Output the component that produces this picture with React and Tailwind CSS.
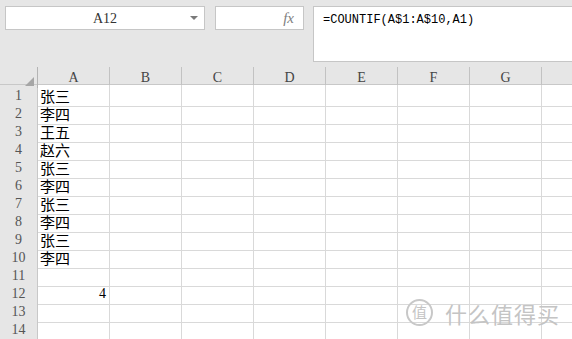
import { useState } from "react";

const cols = ["A", "B", "C", "D", "E", "F", "G", ""];
const names = ["张三", "李四", "王五", "赵六", "张三", "李四", "张三", "李四", "张三", "李四"];

export default function App() {
  const [sel] = useState("A12");

  const rows = Array.from({ length: 14 }, (_, i) => i + 1);

  return (
    <div className="relative w-[572px] h-[339px] overflow-hidden bg-white font-['Liberation_Serif',serif]">
      {/* barra de fórmulas */}
      <div className="flex items-start h-[67px] bg-[#e6e6e6] pt-[6px]">
        <div className="relative ml-[5px] w-[200px] h-[24px] bg-white border border-[#c6c6c6] flex items-center justify-center text-[14px] text-[#333]">
          {sel}
          <span className="absolute right-[6px] top-[9px] w-0 h-0 border-l-[4px] border-r-[4px] border-t-[4px] border-l-transparent border-r-transparent border-t-[#7a7a7a]" />
        </div>
        <div className="ml-[10px] w-[89px] h-[24px] bg-white border border-[#c6c6c6] flex items-center justify-end pr-[9px] text-[15px] italic text-[#808080]">
          fx
        </div>
        <div className="ml-[9px] flex-1 h-[56px] bg-white border border-[#c6c6c6] border-r-0 pl-[9px] pt-[4px] text-[12px] text-black font-['Liberation_Mono',monospace]">
          =COUNTIF(A$1:A$10,A1)
        </div>
      </div>

      {/* cabecera de columnas */}
      <div className="grid grid-cols-[38px_72px_72px_72px_72px_72px_72px_72px_72px] h-[18px] bg-[#e6e6e6] border-b border-[#c8c8c8]">
        <div className="relative border-r border-[#b4b4b4]">
          <span className="absolute right-[3px] bottom-[2px] w-0 h-0 border-b-[9px] border-l-[9px] border-b-[#a6a6a6] border-l-transparent" />
        </div>
        {cols.map((c, i) => (
          <div
            key={i}
            className="flex items-center justify-center border-r border-[#c2c2c2] text-[14px] text-[#444]"
          >
            {c}
          </div>
        ))}
      </div>

      {/* filas */}
      {rows.map((r) => (
        <div
          key={r}
          className="grid grid-cols-[38px_72px_72px_72px_72px_72px_72px_72px_72px] h-[18px]"
        >
          <div className="flex items-center justify-center bg-[#e6e6e6] border-r border-b border-[#c8c8c8] text-[14px] text-[#555]">
            {r}
          </div>
          {cols.map((c, i) => (
            <div
              key={i}
              className={
                "flex items-center overflow-hidden border-r border-b border-[#d9d9d9] text-[14px] text-black leading-[17px] " +
                (r === 12 && i === 0 ? "justify-end pr-[3px]" : "pl-[2px]")
              }
            >
              {i === 0 && r <= 10 && (
                <span className="font-['Noto_Sans_CJK_SC',sans-serif] text-[15px] leading-[17px]">
                  {names[r - 1]}
                </span>
              )}
              {i === 0 && r === 12 && "4"}
            </div>
          ))}
        </div>
      ))}

      {/* marca de agua */}
      <div className="absolute left-[406px] top-[299px] flex items-center gap-[12px] text-[#c4c4c4] pointer-events-none">
        <span className="w-[27px] h-[27px] rounded-full border-2 border-[#c8c8c8] flex items-center justify-center text-[15px] font-['Noto_Sans_CJK_SC',sans-serif]">
          值
        </span>
        <span className="text-[22px] tracking-[1px] font-['Noto_Sans_CJK_SC',sans-serif] leading-none">
          什么值得买
        </span>
      </div>
    </div>
  );
}
